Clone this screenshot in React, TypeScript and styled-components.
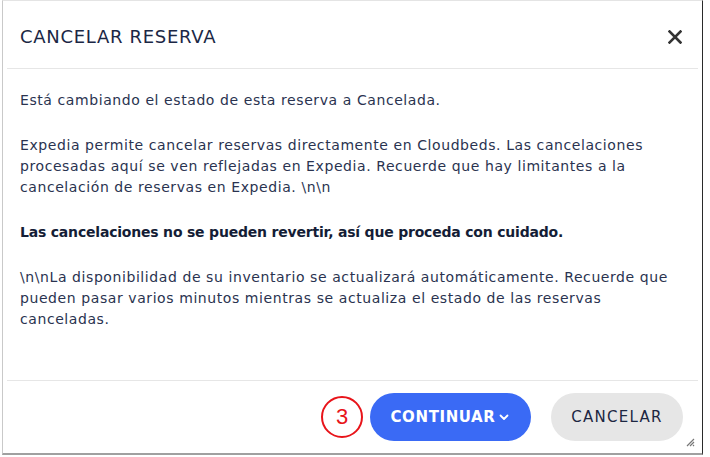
import styled, { createGlobalStyle } from 'styled-components';

const GlobalStyle = createGlobalStyle`
  html, body {
    margin: 0;
    padding: 0;
    background: #ffffff;
  }
  body {
    font-family: 'DejaVu Sans', 'Open Sans', sans-serif;
    color: #1d2742;
  }
`;

export default function App() {
  return (
    <>
      <GlobalStyle />
      <Dialog>
        <Header>
          <Title>CANCELAR RESERVA</Title>
          <CloseButton aria-label="Cerrar">
            <svg width="14" height="14" viewBox="0 0 14 14">
              <path d="M1.5 1.5 L12.5 12.5 M12.5 1.5 L1.5 12.5" stroke="#333" strokeWidth="2.6" strokeLinecap="square" />
            </svg>
          </CloseButton>
        </Header>
        <Divider />
        <Body>
          <Paragraph>Está cambiando el estado de esta reserva a Cancelada.</Paragraph>
          <Paragraph>
            Expedia permite cancelar reservas directamente en Cloudbeds. Las cancelaciones
            <br />
            procesadas aquí se ven reflejadas en Expedia. Recuerde que hay limitantes a la
            <br />
            cancelación de reservas en Expedia. \n\n
          </Paragraph>
          <Paragraph $bold>Las cancelaciones no se pueden revertir, así que proceda con cuidado.</Paragraph>
          <Paragraph>
            \n\nLa disponibilidad de su inventario se actualizará automáticamente. Recuerde que
            <br />
            pueden pasar varios minutos mientras se actualiza el estado de las reservas
            <br />
            canceladas.
          </Paragraph>
        </Body>
        <Divider />
        <Footer>
          <StepBadge>3</StepBadge>
          <PillButton $variant="primary">
            CONTINUAR
            <svg width="12" height="12" viewBox="0 0 12 12">
              <path d="M2.5 4.5 L6 8 L9.5 4.5" fill="none" stroke="#fff" strokeWidth="1.8" strokeLinecap="round" strokeLinejoin="round" />
            </svg>
          </PillButton>
          <PillButton $variant="secondary">CANCELAR</PillButton>
        </Footer>
        <ResizeGrip>
          <svg width="9" height="9" viewBox="0 0 9 9">
            <path d="M8 1 L1 8 M8 4 L4 8 M8 7 L7 8" stroke="#777" strokeWidth="1.2" />
          </svg>
        </ResizeGrip>
      </Dialog>
    </>
  );
}

const Dialog = styled.div`
  position: relative;
  box-sizing: border-box;
  margin-left: 2px;
  width: 701px;
  height: 455px;
  display: flex;
  flex-direction: column;
  background: #fff;
  border-top: 1px solid #e4e4e4;
  border-left: 1px solid #c9c9c9;
  border-right: 1px solid #2a2a2a;
  border-bottom: 2px solid #a0a0a0;
`;

const Header = styled.header`
  height: 67px;
  display: flex;
  align-items: center;
  justify-content: space-between;
  padding: 4px 20px 0 17px;
  box-sizing: border-box;
`;

const Title = styled.h1`
  margin: 0;
  font-size: 18px;
  font-weight: 400;
  letter-spacing: 0.7px;
  color: #1b2745;
`;

const CloseButton = styled.button`
  border: none;
  background: none;
  padding: 0;
  width: 14px;
  height: 14px;
  display: flex;
  cursor: pointer;
`;

const Divider = styled.hr`
  margin: 0 4px;
  border: none;
  border-top: 1px solid #e6e6e6;
`;

const Body = styled.div`
  flex: 1;
  padding: 21px 17px 0;
`;

const Paragraph = styled.p<{ $bold?: boolean }>`
  margin: 0 0 24px;
  font-size: 14px;
  line-height: 21px;
  font-weight: ${(p) => (p.$bold ? 700 : 400)};
  color: ${(p) => (p.$bold ? '#141d36' : '#2a3350')};
  letter-spacing: ${(p) => (p.$bold ? '-0.2px' : '0.58px')};
  white-space: nowrap;
`;

const Footer = styled.footer`
  height: 72px;
  display: flex;
  align-items: center;
  justify-content: flex-end;
  padding: 0 19px 0 0;
  gap: 20px;
`;

const StepBadge = styled.div`
  width: 42px;
  height: 42px;
  box-sizing: border-box;
  border: 2px solid #e8141a;
  border-radius: 50%;
  display: flex;
  align-items: center;
  justify-content: center;
  font-family: 'Liberation Sans', Arial, sans-serif;
  font-size: 22px;
  color: #e8141a;
  margin-right: -13px;
`;

const PillButton = styled.button<{ $variant: 'primary' | 'secondary' }>`
  height: 48px;
  border: none;
  border-radius: 24px;
  display: flex;
  align-items: center;
  gap: 3px;
  font-family: 'DejaVu Sans', 'Open Sans', sans-serif;
  font-size: 15px;
  cursor: pointer;
  padding: 0;
  width: ${(p) => (p.$variant === 'primary' ? '161px' : '132px')};
  justify-content: center;
  font-weight: ${(p) => (p.$variant === 'primary' ? 700 : 400)};
  letter-spacing: ${(p) => (p.$variant === 'primary' ? '0.6px' : '1.3px')};
  background: ${(p) => (p.$variant === 'primary' ? '#3a6af5' : '#e6e6e6')};
  color: ${(p) => (p.$variant === 'primary' ? '#ffffff' : '#1d2742')};
`;

const ResizeGrip = styled.div`
  position: absolute;
  right: 7px;
  bottom: 6px;
  width: 9px;
  height: 9px;
  display: flex;
`;
